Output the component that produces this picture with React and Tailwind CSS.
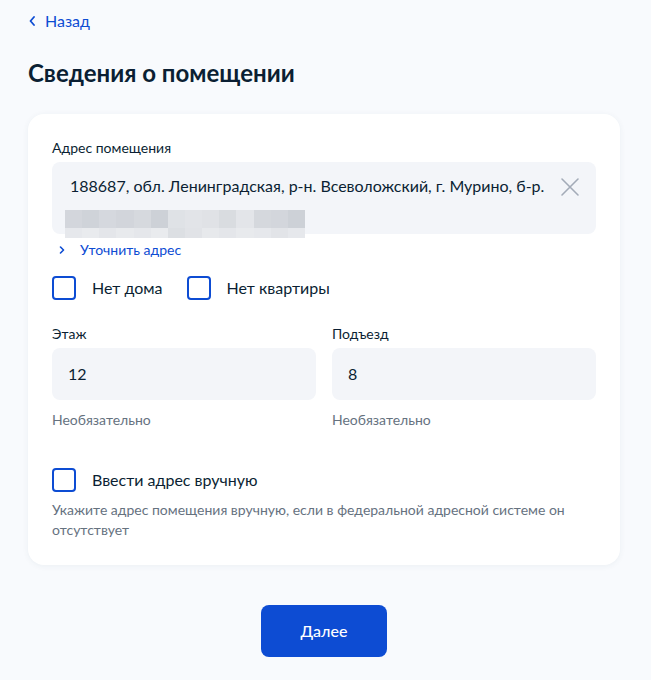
import React from "react";

function Checkbox({ label }) {
  return (
    <label className="flex items-center gap-4">
      <span className="w-6 h-6 rounded-[4px] border-2 border-[#0d4cd3] bg-white shrink-0" />
      <span className="text-[16px] leading-6 text-[#0b1f33]">{label}</span>
    </label>
  );
}

function Blur() {
  const top = ["#d3d6dc", "#cfd3d9", "#d5d8de", "#d2d5db", "#d6d9de", "#cdd1d7", "#dfe2e6", "#e2e4e8", "#e0e2e6", "#d9dce0", "#e3e5e9", "#d5d8dd", "#d3d6dc", "#cdd1d7"];
  const bot = ["#e6e8ec", "#e9ebee", "#e4e6ea", "#e8eaed", "#e5e7eb", "#e9ebee", "#dcdfe3", "#e1e3e7", "#e7e9ec", "#e4e6ea", "#e8eaed", "#e6e8ec", "#e2e4e8", "#e6e8ec"];
  return (
    <div className="mt-3 ml-[-5px] w-[240px] flex flex-col">
      <div className="flex h-[18px]">
        {top.map((c, i) => (
          <div key={i} className="flex-1" style={{ background: c }} />
        ))}
      </div>
      <div className="flex h-[10px]">
        {bot.map((c, i) => (
          <div key={i} className="flex-1" style={{ background: c }} />
        ))}
      </div>
    </div>
  );
}

export default function App() {
  return (
    <div className="min-h-[680px] bg-[#f8fafd] font-['Lato',sans-serif] text-[#0b1f33]">
      <div className="w-[592px] ml-[28px] pt-[9px]">
        <a className="flex items-center gap-[10px] text-[16px] leading-6 text-[#0d4cd3]">
          <svg width="6" height="10" viewBox="0 0 6 10" fill="none" className="ml-[1px]">
            <path d="M5 1L1.5 5L5 9" stroke="#0d4cd3" strokeWidth="1.8" strokeLinecap="round" strokeLinejoin="round" />
          </svg>
          <span>Назад</span>
        </a>
        <h1 className="mt-[24px] text-[24px] leading-8 font-bold">Сведения о помещении</h1>

        <div className="mt-[25px] bg-white rounded-[16px] shadow-[0_1px_6px_rgba(40,60,90,0.06)] px-6 pt-6 pb-[25px]">
          <div className="text-[14px] leading-5 text-[#0b1f33]">Адрес помещения</div>
          <div className="mt-1 h-[72px] rounded-[8px] bg-[#f3f5f9] pl-[18px] pr-[16px] pt-3 flex">
            <div className="flex-1">
              <div className="text-[16px] leading-6">188687, обл. Ленинградская, р-н. Всеволожский, г. Мурино, б-р.</div>
              <Blur />
            </div>
            <svg width="20" height="20" viewBox="0 0 20 20" fill="none" className="mt-[3px] ml-[8px]">
              <path d="M2 2L18 18M18 2L2 18" stroke="#a3abb8" strokeWidth="1.6" strokeLinecap="round" />
            </svg>
          </div>
          <a className="mt-[6px] flex items-center text-[14px] leading-5 text-[#0d4cd3]">
            <svg width="6" height="8" viewBox="0 0 6 8" fill="none" className="ml-[7px] mr-[15px]">
              <path d="M1.5 1L4.5 4L1.5 7" stroke="#0d4cd3" strokeWidth="1.6" strokeLinecap="round" strokeLinejoin="round" />
            </svg>
            <span>Уточнить адрес</span>
          </a>

          <div className="mt-[16px] flex items-center gap-[24px]">
            <Checkbox label="Нет дома" />
            <Checkbox label="Нет квартиры" />
          </div>

          <div className="mt-[24px] grid grid-cols-2 gap-4">
            <div>
              <div className="text-[14px] leading-5">Этаж</div>
              <div className="mt-1 h-[52px] rounded-[8px] bg-[#f3f5f9] px-4 flex items-center text-[16px]">12</div>
              <div className="mt-[10px] text-[14px] leading-5 text-[#66727f]">Необязательно</div>
            </div>
            <div>
              <div className="text-[14px] leading-5">Подъезд</div>
              <div className="mt-1 h-[52px] rounded-[8px] bg-[#f3f5f9] px-4 flex items-center text-[16px]">8</div>
              <div className="mt-[10px] text-[14px] leading-5 text-[#66727f]">Необязательно</div>
            </div>
          </div>

          <div className="mt-[38px]">
            <Checkbox label="Ввести адрес вручную" />
          </div>
          <p className="mt-2 text-[14px] leading-5 text-[#66727f] pr-[10px]">
            Укажите адрес помещения вручную, если в федеральной адресной системе он отсутствует
          </p>
        </div>

        <div className="mt-[40px] flex justify-center">
          <button className="w-[126px] h-[52px] rounded-[8px] bg-[#0d4cd3] text-white text-[16px] font-medium">
            Далее
          </button>
        </div>
      </div>
    </div>
  );
}
